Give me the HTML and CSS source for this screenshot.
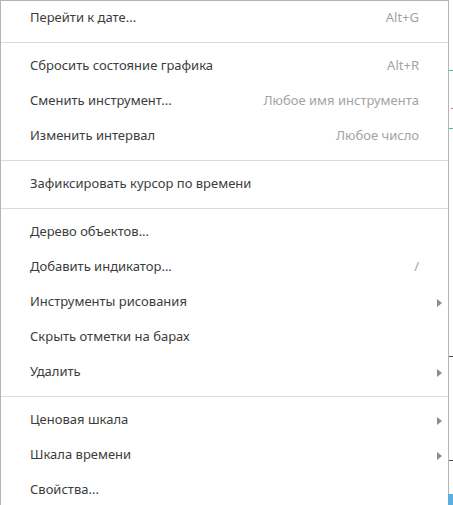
FILE: index.html
```html
<!DOCTYPE html>
<html lang="ru">
<head>
  <meta charset="UTF-8" />
  <title>Контекстное меню графика</title>
  <link rel="stylesheet" href="styles.css">
</head>
<body>

  <div class="chart">
    <!-- Кусочки графика, видные справа от меню -->
    <span class="mark teal" style="top: 70px;"></span>
    <span class="mark pink" style="top: 108px;"></span>
    <span class="mark teal" style="top: 128px;"></span>
    <span class="mark dark" style="top: 356px;"></span>
    <span class="mark dark" style="top: 460px;"></span>
    <span class="mark-box"></span>

    <div class="menu">
      <div class="item"><span class="label">Перейти к дате...</span><span class="hint">Alt+G</span><span class="sub"></span></div>
      <div class="sep"></div>
      <div class="item"><span class="label">Сбросить состояние графика</span><span class="hint">Alt+R</span><span class="sub"></span></div>
      <div class="item"><span class="label">Сменить инструмент...</span><span class="hint">Любое имя инструмента</span><span class="sub"></span></div>
      <div class="item"><span class="label">Изменить интервал</span><span class="hint">Любое число</span><span class="sub"></span></div>
      <div class="sep"></div>
      <div class="item"><span class="label">Зафиксировать курсор по времени</span><span class="hint"></span><span class="sub"></span></div>
      <div class="sep"></div>
      <div class="item"><span class="label">Дерево объектов...</span><span class="hint"></span><span class="sub"></span></div>
      <div class="item"><span class="label">Добавить индикатор...</span><span class="hint">/</span><span class="sub"></span></div>
      <div class="item"><span class="label">Инструменты рисования</span><span class="hint"></span><span class="sub arrow"></span></div>
      <div class="item"><span class="label">Скрыть отметки на барах</span><span class="hint"></span><span class="sub"></span></div>
      <div class="item"><span class="label">Удалить</span><span class="hint"></span><span class="sub arrow"></span></div>
      <div class="sep"></div>
      <div class="item"><span class="label">Ценовая шкала</span><span class="hint"></span><span class="sub arrow"></span></div>
      <div class="item"><span class="label">Шкала времени</span><span class="hint"></span><span class="sub arrow"></span></div>
      <div class="item"><span class="label">Свойства...</span><span class="hint"></span><span class="sub"></span></div>
    </div>
  </div>

</body>
</html>
```

FILE: styles.css
```css
* {
  margin: 0;
  padding: 0;
  box-sizing: border-box;
}

html, body {
  width: 100%;
  height: 100%;
  background: #ffffff;
  overflow: hidden;
}

body {
  font-family: 'Noto Sans', 'Open Sans', sans-serif;
  font-size: 13px;
  color: #3c3c3c;
}

/* Фон графика под меню */
.chart {
  position: relative;
  width: 453px;
  height: 505px;
}

.mark {
  position: absolute;
  left: 449px;
  width: 4px;
  height: 1px;
}
.mark.teal { background: #4fb8a4; }
.mark.pink { background: #d77a8c; width: 2px; left: 451px; }
.mark.dark { background: #555555; }

.mark-box {
  position: absolute;
  left: 448px;
  top: 494px;
  width: 5px;
  height: 11px;
  background: #5aaee0;
}

/* Само меню */
.menu {
  width: 449px;
  background: #ffffff;
  border: 1px solid #b4b4b4;
  border-bottom: none;
}

.item {
  height: 35px;
  display: flex;
  align-items: center;
  padding-left: 29px;
  padding-bottom: 3px;
  white-space: nowrap;
}

.label {
  flex: 1;
}

.hint {
  color: #a3a3a3;
}

.sub {
  width: 29px;
  display: flex;
  align-items: center;
  padding-left: 18px;
}

.sub.arrow::before {
  content: "";
  margin-top: 3px;
  border-left: 5px solid #8c8c8c;
  border-top: 4px solid transparent;
  border-bottom: 4px solid transparent;
}

.sep {
  height: 1px;
  margin: 6px 0;
  background: #dadada;
}
```
